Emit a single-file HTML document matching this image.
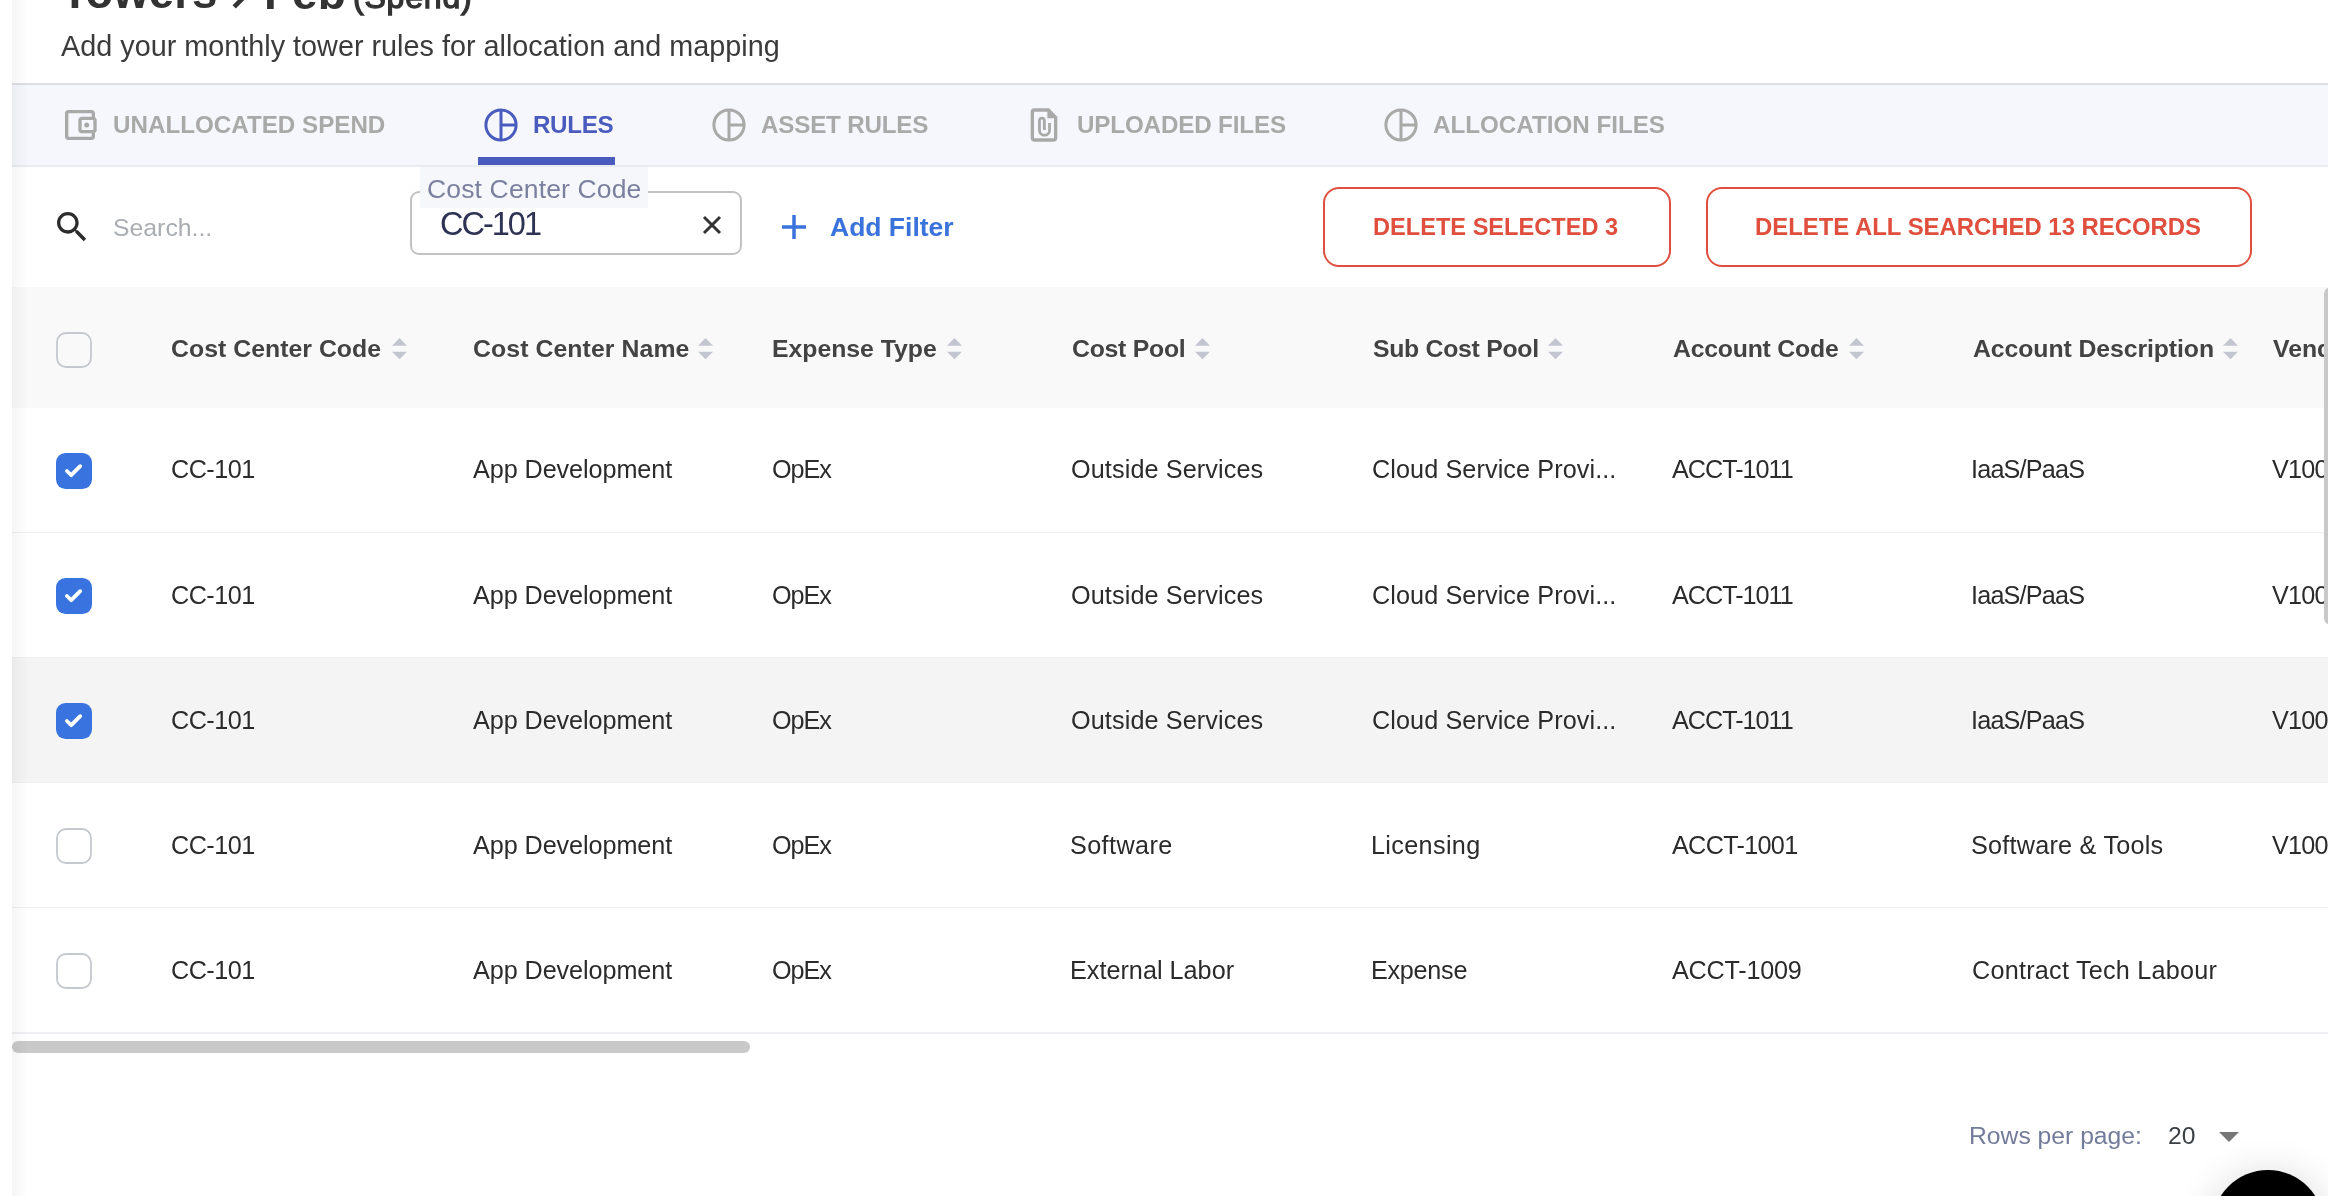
<!DOCTYPE html>
<html><head><meta charset="utf-8">
<style>
html,body{margin:0;padding:0;overflow:hidden;}
body{width:2328px;height:1196px;overflow:hidden;background:#fff;position:relative;font-family:"Liberation Sans",sans-serif;}
.t{position:absolute;white-space:nowrap;will-change:transform;}
.abs{position:absolute;}
svg{position:absolute;overflow:visible;}
</style></head><body><div style="position:absolute;left:0;top:0;width:2328px;height:1196px;overflow:hidden;">
<div class="abs" style="left:12px;top:0;width:16px;height:1196px;background:linear-gradient(to right,rgba(0,0,0,0.04),rgba(0,0,0,0));z-index:5;pointer-events:none"></div>
<div class="t" style="left:60.80px;top:-29.60px;font-size:45.6px;line-height:45.6px;font-weight:700;color:#333;">Towers</div>
<svg style="left:0;top:0" width="300" height="20"><polyline points="234.2,6.9 249,-7.9 234.2,-22.7" fill="none" stroke="#333" stroke-width="4.6"/></svg>
<div class="t" style="left:263.50px;top:-29.94px;font-size:46px;line-height:46px;font-weight:700;color:#333;">Feb</div>
<div class="t" style="left:352.50px;top:-19.49px;font-size:32px;line-height:32px;font-weight:400;color:#333;letter-spacing:0.8px;-webkit-text-stroke:1.3px #333;">(Spend)</div>
<div class="t" style="left:60.50px;top:31.62px;font-size:28.8px;line-height:28.8px;font-weight:400;color:#3b3b3b;">Add your monthly tower rules for allocation and mapping</div>
<div class="abs" style="left:12px;top:83px;width:2316px;height:2px;background:#dfdfdf"></div>
<div class="abs" style="left:12px;top:85px;width:2316px;height:80px;background:#f6f7fc"></div>
<div class="abs" style="left:12px;top:165px;width:2316px;height:2px;background:#eaebf0"></div>
<svg style="left:60.1px;top:104.9px" width="40" height="40" viewBox="0 0 24 24"><path fill="#a9a9a9" d="M21 7.28V5c0-1.1-.9-2-2-2H5c-1.11 0-2 .9-2 2v14c0 1.1.89 2 2 2h14c1.1 0 2-.9 2-2v-2.28c.59-.35 1-.98 1-1.72V9c0-.74-.41-1.37-1-1.72zM20 9v6h-7V9h7zM5 19V5h14v2h-6c-1.1 0-2 .9-2 2v6c0 1.1.9 2 2 2h6v2H5z"/><circle fill="#a9a9a9" cx="16" cy="12" r="1.5"/></svg>
<svg style="left:480.6px;top:104.9px" width="40" height="40" viewBox="0 0 40 40"><circle cx="20" cy="20" r="15.1" fill="none" stroke="#4a5bbe" stroke-width="3"/><line x1="20" y1="5" x2="20" y2="35" stroke="#4a5bbe" stroke-width="3"/><line x1="20" y1="20" x2="35" y2="20" stroke="#4a5bbe" stroke-width="3"/></svg>
<svg style="left:709.1px;top:104.9px" width="40" height="40" viewBox="0 0 40 40"><circle cx="20" cy="20" r="15.1" fill="none" stroke="#a9a9a9" stroke-width="3"/><line x1="20" y1="5" x2="20" y2="35" stroke="#a9a9a9" stroke-width="3"/><line x1="20" y1="20" x2="35" y2="20" stroke="#a9a9a9" stroke-width="3"/></svg>
<svg style="left:1380.6px;top:104.9px" width="40" height="40" viewBox="0 0 40 40"><circle cx="20" cy="20" r="15.1" fill="none" stroke="#a9a9a9" stroke-width="3"/><line x1="20" y1="5" x2="20" y2="35" stroke="#a9a9a9" stroke-width="3"/><line x1="20" y1="20" x2="35" y2="20" stroke="#a9a9a9" stroke-width="3"/></svg>
<svg style="left:1024.4px;top:104.5px" width="40" height="40" viewBox="0 0 24 24"><path fill="#a9a9a9" d="M15 2H6c-1.1 0-2 .9-2 2v16c0 1.1.9 2 2 2h12c1.1 0 2-.9 2-2V7l-5-5zM6 20V4h8v4h4v12H6z"/></svg>
<svg style="left:1020px;top:100px" width="60" height="50" viewBox="0 0 60 50"><path fill="none" stroke="#a9a9a9" stroke-width="2.8" d="M24.35 29.9V20.5A2.45 2.45 0 0 0 19.45 20.5V30.15A5.05 5.05 0 0 0 29.55 30.15V23"/></svg>
<div class="t" style="left:112.50px;top:112.51px;font-size:24.2px;line-height:24.2px;font-weight:700;color:#a9a9a9;">UNALLOCATED SPEND</div>
<div class="t" style="left:533.30px;top:112.51px;font-size:24.2px;line-height:24.2px;font-weight:700;color:#4a5bbe;letter-spacing:-0.35px;">RULES</div>
<div class="t" style="left:761.20px;top:112.51px;font-size:24.2px;line-height:24.2px;font-weight:700;color:#a9a9a9;letter-spacing:-0.2px;">ASSET RULES</div>
<div class="t" style="left:1076.50px;top:112.51px;font-size:24.2px;line-height:24.2px;font-weight:700;color:#a9a9a9;letter-spacing:-0.15px;">UPLOADED FILES</div>
<div class="t" style="left:1432.50px;top:112.51px;font-size:24.2px;line-height:24.2px;font-weight:700;color:#a9a9a9;">ALLOCATION FILES</div>
<div class="abs" style="left:478px;top:157px;width:137px;height:8px;background:#4a5bbe"></div>
<svg style="left:52px;top:207px" width="40" height="40" viewBox="0 0 24 24"><path fill="#2c2c2c" d="M15.5 14h-.79l-.28-.27C15.41 12.59 16 11.11 16 9.5 16 5.91 13.09 3 9.5 3S3 5.91 3 9.5 5.91 16 9.5 16c1.61 0 3.09-.59 4.23-1.57l.27.28v.79l5 4.99L20.49 19l-4.99-5zm-6 0C7.01 14 5 11.99 5 9.5S7.01 5 9.5 5 14 7.01 14 9.5 11.99 14 9.5 14z"/></svg>
<div class="t" style="left:112.50px;top:215.61px;font-size:24.8px;line-height:24.8px;font-weight:400;color:#a9adb2;">Search...</div>
<div class="abs" style="left:410px;top:191px;width:332px;height:64px;box-sizing:border-box;border:2px solid #c2c2c2;border-radius:9px;background:#fff"></div>
<div class="abs" style="left:420px;top:167px;width:228px;height:41px;background:#f6f7fb"></div>
<div class="t" style="left:426.50px;top:175.57px;font-size:26.5px;line-height:26.5px;font-weight:400;color:#7b809e;letter-spacing:0.15px;">Cost Center Code</div>
<div class="t" style="left:440.00px;top:207.79px;font-size:32.5px;line-height:32.5px;font-weight:400;color:#2e3354;letter-spacing:-2px;">CC-101</div>
<svg style="left:700px;top:213px" width="24" height="24" viewBox="0 0 24 24"><path d="M4 4L20 20M20 4L4 20" stroke="#333" stroke-width="3"/></svg>
<svg style="left:780px;top:213px" width="28" height="28" viewBox="0 0 28 28"><path d="M14 2V26M2 14H26" stroke="#3a73dc" stroke-width="3.5"/></svg>
<div class="t" style="left:830.00px;top:214.47px;font-size:26.5px;line-height:26.5px;font-weight:700;color:#3a73dc;">Add Filter</div>
<div class="abs" style="left:1323px;top:187px;width:348px;height:80px;box-sizing:border-box;border:2px solid #e04f3d;border-radius:16px"></div>
<div class="t" style="left:1372.70px;top:215.52px;font-size:23.6px;line-height:23.6px;font-weight:700;color:#e04f3d;">DELETE SELECTED 3</div>
<div class="abs" style="left:1706px;top:187px;width:546px;height:80px;box-sizing:border-box;border:2px solid #e04f3d;border-radius:16px"></div>
<div class="t" style="left:1754.80px;top:215.27px;font-size:23.9px;line-height:23.9px;font-weight:700;color:#e04f3d;">DELETE ALL SEARCHED 13 RECORDS</div>
<div class="abs" style="left:12px;top:287px;width:2316px;height:121px;background:#f9f9f9"></div>
<svg style="left:56px;top:332px" width="36" height="36" viewBox="0 0 36 36"><rect x="1" y="1" width="34" height="34" rx="9" fill="#f9f9f9" stroke="#c5c9ce" stroke-width="1.8"/></svg>
<div class="t" style="left:171.40px;top:336.51px;font-size:24.8px;line-height:24.8px;font-weight:700;color:#434343;letter-spacing:0.039px;">Cost Center Code</div>
<svg style="left:392px;top:338.2px" width="15" height="22" viewBox="0 0 15 22"><path d="M7.5 0L15 7.7H0Z M0 13.7H15L7.5 21.2Z" fill="#c3c5d1"/></svg>
<div class="t" style="left:472.60px;top:336.51px;font-size:24.8px;line-height:24.8px;font-weight:700;color:#434343;letter-spacing:0.094px;">Cost Center Name</div>
<svg style="left:698px;top:338.2px" width="15" height="22" viewBox="0 0 15 22"><path d="M7.5 0L15 7.7H0Z M0 13.7H15L7.5 21.2Z" fill="#c3c5d1"/></svg>
<div class="t" style="left:771.60px;top:336.51px;font-size:24.8px;line-height:24.8px;font-weight:700;color:#434343;letter-spacing:-0.019px;">Expense Type</div>
<svg style="left:946.5px;top:338.2px" width="15" height="22" viewBox="0 0 15 22"><path d="M7.5 0L15 7.7H0Z M0 13.7H15L7.5 21.2Z" fill="#c3c5d1"/></svg>
<div class="t" style="left:1071.80px;top:336.51px;font-size:24.8px;line-height:24.8px;font-weight:700;color:#434343;letter-spacing:-0.25px;">Cost Pool</div>
<svg style="left:1195.3px;top:338.2px" width="15" height="22" viewBox="0 0 15 22"><path d="M7.5 0L15 7.7H0Z M0 13.7H15L7.5 21.2Z" fill="#c3c5d1"/></svg>
<div class="t" style="left:1372.60px;top:336.51px;font-size:24.8px;line-height:24.8px;font-weight:700;color:#434343;letter-spacing:-0.284px;">Sub Cost Pool</div>
<svg style="left:1548px;top:338.2px" width="15" height="22" viewBox="0 0 15 22"><path d="M7.5 0L15 7.7H0Z M0 13.7H15L7.5 21.2Z" fill="#c3c5d1"/></svg>
<div class="t" style="left:1672.60px;top:336.51px;font-size:24.8px;line-height:24.8px;font-weight:700;color:#434343;letter-spacing:-0.218px;">Account Code</div>
<svg style="left:1848.5px;top:338.2px" width="15" height="22" viewBox="0 0 15 22"><path d="M7.5 0L15 7.7H0Z M0 13.7H15L7.5 21.2Z" fill="#c3c5d1"/></svg>
<div class="t" style="left:1972.60px;top:336.51px;font-size:24.8px;line-height:24.8px;font-weight:700;color:#434343;letter-spacing:-0.078px;">Account Description</div>
<svg style="left:2223.2px;top:338.2px" width="15" height="22" viewBox="0 0 15 22"><path d="M7.5 0L15 7.7H0Z M0 13.7H15L7.5 21.2Z" fill="#c3c5d1"/></svg>
<div class="t" style="left:2272.80px;top:336.51px;font-size:24.8px;line-height:24.8px;font-weight:700;color:#434343;">Vendor</div>
<div class="abs" style="left:12px;top:408px;width:2316px;height:125px;background:#fff"></div>
<div class="abs" style="left:12px;top:532px;width:2316px;height:2px;background:#eff0f4"></div>
<svg style="left:56px;top:453px" width="36" height="36" viewBox="0 0 36 36"><rect x="0" y="0" width="36" height="36" rx="9.5" fill="#3873e0"/><path d="M10.9 18L15.2 22.2L24.2 13.2" fill="none" stroke="#fff" stroke-width="3.8" stroke-linecap="round" stroke-linejoin="round"/></svg>
<div class="t" style="left:171.40px;top:457.47px;font-size:25.2px;line-height:25.2px;font-weight:400;color:#2b2b2b;letter-spacing:-0.52px;">CC-101</div>
<div class="t" style="left:472.80px;top:457.47px;font-size:25.2px;line-height:25.2px;font-weight:400;color:#2b2b2b;letter-spacing:-0.072px;">App Development</div>
<div class="t" style="left:772.00px;top:457.47px;font-size:25.2px;line-height:25.2px;font-weight:400;color:#2b2b2b;letter-spacing:-1.067px;">OpEx</div>
<div class="t" style="left:1071.00px;top:457.47px;font-size:25.2px;line-height:25.2px;font-weight:400;color:#2b2b2b;letter-spacing:0.121px;">Outside Services</div>
<div class="t" style="left:1371.60px;top:457.47px;font-size:25.2px;line-height:25.2px;font-weight:400;color:#2b2b2b;letter-spacing:0.104px;">Cloud Service Provi...</div>
<div class="t" style="left:1672.40px;top:457.47px;font-size:25.2px;line-height:25.2px;font-weight:400;color:#2b2b2b;letter-spacing:-1.0px;">ACCT-1011</div>
<div class="t" style="left:1971.00px;top:457.47px;font-size:25.2px;line-height:25.2px;font-weight:400;color:#2b2b2b;letter-spacing:-0.8px;">IaaS/PaaS</div>
<div class="t" style="left:2272.30px;top:457.47px;font-size:25.2px;line-height:25.2px;font-weight:400;color:#2b2b2b;letter-spacing:-0.8px;">V100</div>
<div class="abs" style="left:12px;top:533px;width:2316px;height:125px;background:#fff"></div>
<div class="abs" style="left:12px;top:657px;width:2316px;height:2px;background:#eff0f4"></div>
<svg style="left:56px;top:578px" width="36" height="36" viewBox="0 0 36 36"><rect x="0" y="0" width="36" height="36" rx="9.5" fill="#3873e0"/><path d="M10.9 18L15.2 22.2L24.2 13.2" fill="none" stroke="#fff" stroke-width="3.8" stroke-linecap="round" stroke-linejoin="round"/></svg>
<div class="t" style="left:171.40px;top:582.67px;font-size:25.2px;line-height:25.2px;font-weight:400;color:#2b2b2b;letter-spacing:-0.52px;">CC-101</div>
<div class="t" style="left:472.80px;top:582.67px;font-size:25.2px;line-height:25.2px;font-weight:400;color:#2b2b2b;letter-spacing:-0.072px;">App Development</div>
<div class="t" style="left:772.00px;top:582.67px;font-size:25.2px;line-height:25.2px;font-weight:400;color:#2b2b2b;letter-spacing:-1.067px;">OpEx</div>
<div class="t" style="left:1071.00px;top:582.67px;font-size:25.2px;line-height:25.2px;font-weight:400;color:#2b2b2b;letter-spacing:0.121px;">Outside Services</div>
<div class="t" style="left:1371.60px;top:582.67px;font-size:25.2px;line-height:25.2px;font-weight:400;color:#2b2b2b;letter-spacing:0.104px;">Cloud Service Provi...</div>
<div class="t" style="left:1672.40px;top:582.67px;font-size:25.2px;line-height:25.2px;font-weight:400;color:#2b2b2b;letter-spacing:-1.0px;">ACCT-1011</div>
<div class="t" style="left:1971.00px;top:582.67px;font-size:25.2px;line-height:25.2px;font-weight:400;color:#2b2b2b;letter-spacing:-0.8px;">IaaS/PaaS</div>
<div class="t" style="left:2272.30px;top:582.67px;font-size:25.2px;line-height:25.2px;font-weight:400;color:#2b2b2b;letter-spacing:-0.8px;">V100</div>
<div class="abs" style="left:12px;top:658px;width:2316px;height:125px;background:#f4f4f5"></div>
<div class="abs" style="left:12px;top:782px;width:2316px;height:2px;background:#eff0f4"></div>
<svg style="left:56px;top:703px" width="36" height="36" viewBox="0 0 36 36"><rect x="0" y="0" width="36" height="36" rx="9.5" fill="#3873e0"/><path d="M10.9 18L15.2 22.2L24.2 13.2" fill="none" stroke="#fff" stroke-width="3.8" stroke-linecap="round" stroke-linejoin="round"/></svg>
<div class="t" style="left:171.40px;top:707.87px;font-size:25.2px;line-height:25.2px;font-weight:400;color:#2b2b2b;letter-spacing:-0.52px;">CC-101</div>
<div class="t" style="left:472.80px;top:707.87px;font-size:25.2px;line-height:25.2px;font-weight:400;color:#2b2b2b;letter-spacing:-0.072px;">App Development</div>
<div class="t" style="left:772.00px;top:707.87px;font-size:25.2px;line-height:25.2px;font-weight:400;color:#2b2b2b;letter-spacing:-1.067px;">OpEx</div>
<div class="t" style="left:1071.00px;top:707.87px;font-size:25.2px;line-height:25.2px;font-weight:400;color:#2b2b2b;letter-spacing:0.121px;">Outside Services</div>
<div class="t" style="left:1371.60px;top:707.87px;font-size:25.2px;line-height:25.2px;font-weight:400;color:#2b2b2b;letter-spacing:0.104px;">Cloud Service Provi...</div>
<div class="t" style="left:1672.40px;top:707.87px;font-size:25.2px;line-height:25.2px;font-weight:400;color:#2b2b2b;letter-spacing:-1.0px;">ACCT-1011</div>
<div class="t" style="left:1971.00px;top:707.87px;font-size:25.2px;line-height:25.2px;font-weight:400;color:#2b2b2b;letter-spacing:-0.8px;">IaaS/PaaS</div>
<div class="t" style="left:2272.30px;top:707.87px;font-size:25.2px;line-height:25.2px;font-weight:400;color:#2b2b2b;letter-spacing:-0.8px;">V100</div>
<div class="abs" style="left:12px;top:783px;width:2316px;height:125px;background:#fff"></div>
<div class="abs" style="left:12px;top:907px;width:2316px;height:2px;background:#eff0f4"></div>
<svg style="left:56px;top:828px" width="36" height="36" viewBox="0 0 36 36"><rect x="1" y="1" width="34" height="34" rx="9" fill="#fff" stroke="#c5c9ce" stroke-width="1.8"/></svg>
<div class="t" style="left:171.40px;top:833.07px;font-size:25.2px;line-height:25.2px;font-weight:400;color:#2b2b2b;letter-spacing:-0.52px;">CC-101</div>
<div class="t" style="left:472.80px;top:833.07px;font-size:25.2px;line-height:25.2px;font-weight:400;color:#2b2b2b;letter-spacing:-0.072px;">App Development</div>
<div class="t" style="left:772.00px;top:833.07px;font-size:25.2px;line-height:25.2px;font-weight:400;color:#2b2b2b;letter-spacing:-1.067px;">OpEx</div>
<div class="t" style="left:1070.40px;top:833.07px;font-size:25.2px;line-height:25.2px;font-weight:400;color:#2b2b2b;letter-spacing:0.401px;">Software</div>
<div class="t" style="left:1371.20px;top:833.07px;font-size:25.2px;line-height:25.2px;font-weight:400;color:#2b2b2b;letter-spacing:0.352px;">Licensing</div>
<div class="t" style="left:1672.40px;top:833.07px;font-size:25.2px;line-height:25.2px;font-weight:400;color:#2b2b2b;letter-spacing:-0.675px;">ACCT-1001</div>
<div class="t" style="left:1971.00px;top:833.07px;font-size:25.2px;line-height:25.2px;font-weight:400;color:#2b2b2b;letter-spacing:0.241px;">Software &amp; Tools</div>
<div class="t" style="left:2272.30px;top:833.07px;font-size:25.2px;line-height:25.2px;font-weight:400;color:#2b2b2b;letter-spacing:-0.8px;">V100</div>
<div class="abs" style="left:12px;top:908px;width:2316px;height:125px;background:#fff"></div>
<div class="abs" style="left:12px;top:1032px;width:2316px;height:2px;background:#eff0f4"></div>
<svg style="left:56px;top:953px" width="36" height="36" viewBox="0 0 36 36"><rect x="1" y="1" width="34" height="34" rx="9" fill="#fff" stroke="#c5c9ce" stroke-width="1.8"/></svg>
<div class="t" style="left:171.40px;top:958.27px;font-size:25.2px;line-height:25.2px;font-weight:400;color:#2b2b2b;letter-spacing:-0.52px;">CC-101</div>
<div class="t" style="left:472.80px;top:958.27px;font-size:25.2px;line-height:25.2px;font-weight:400;color:#2b2b2b;letter-spacing:-0.072px;">App Development</div>
<div class="t" style="left:772.00px;top:958.27px;font-size:25.2px;line-height:25.2px;font-weight:400;color:#2b2b2b;letter-spacing:-1.067px;">OpEx</div>
<div class="t" style="left:1070.40px;top:958.27px;font-size:25.2px;line-height:25.2px;font-weight:400;color:#2b2b2b;letter-spacing:0.017px;">External Labor</div>
<div class="t" style="left:1371.20px;top:958.27px;font-size:25.2px;line-height:25.2px;font-weight:400;color:#2b2b2b;letter-spacing:-0.267px;">Expense</div>
<div class="t" style="left:1672.40px;top:958.27px;font-size:25.2px;line-height:25.2px;font-weight:400;color:#2b2b2b;letter-spacing:-0.227px;">ACCT-1009</div>
<div class="t" style="left:1972.00px;top:958.27px;font-size:25.2px;line-height:25.2px;font-weight:400;color:#2b2b2b;letter-spacing:0.242px;">Contract Tech Labour</div>
<div class="t" style="left:2271.80px;top:958.27px;font-size:25.2px;line-height:25.2px;font-weight:400;color:#2b2b2b;"></div>
<div class="abs" style="left:2324px;top:287px;width:14px;height:338px;background:#c8c8c8;border-radius:7px"></div>
<div class="abs" style="left:12px;top:1041px;width:738px;height:12px;background:#c9c9c9;border-radius:6px"></div>
<div class="t" style="left:1969.00px;top:1123.99px;font-size:24.7px;line-height:24.7px;font-weight:400;color:#737b9a;">Rows per page:</div>
<div class="t" style="left:2167.50px;top:1123.99px;font-size:24.7px;line-height:24.7px;font-weight:400;color:#3b4045;">20</div>
<svg style="left:2219px;top:1132px" width="20" height="10" viewBox="0 0 20 10"><path d="M0 0H20L10 10Z" fill="#777"/></svg>
<div class="abs" style="left:2212px;top:1170px;width:112px;height:112px;border-radius:56px;background:#000;box-shadow:0 4px 40px rgba(0,0,0,0.16)"></div>
</div></body></html>
